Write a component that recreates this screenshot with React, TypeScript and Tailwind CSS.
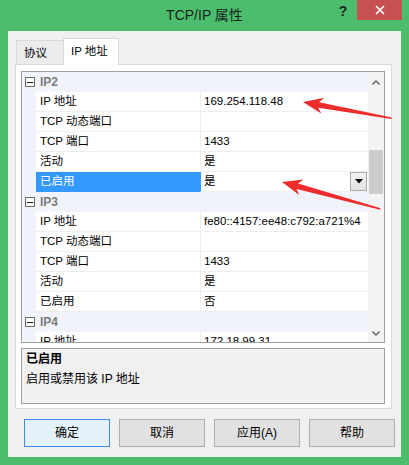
import React from "react";

type Row = { cat?: string; n?: string; v?: string; sel?: boolean };

const rows: Row[] = [
  { cat: "IP2" },
  { n: "IP 地址", v: "169.254.118.48" },
  { n: "TCP 动态端口", v: "" },
  { n: "TCP 端口", v: "1433" },
  { n: "活动", v: "是" },
  { n: "已启用", v: "是", sel: true },
  { cat: "IP3" },
  { n: "IP 地址", v: "fe80::4157:ee48:c792:a721%4" },
  { n: "TCP 动态端口", v: "" },
  { n: "TCP 端口", v: "1433" },
  { n: "活动", v: "是" },
  { n: "已启用", v: "否" },
  { cat: "IP4" },
  { n: "IP 地址", v: "172.18.99.31" },
];

function Minus() {
  return (
    <div className="w-[10px] h-[10px] border border-[#6e6e6e] bg-white flex items-center justify-center">
      <div className="w-[6px] h-[1px] bg-[#222]" />
    </div>
  );
}

function GridRow({ r }: { r: Row }) {
  if (r.cat) {
    return (
      <div className="h-[20px] shrink-0 flex items-center bg-[#f0f4fa]">
        <div className="w-[14px] h-full flex items-center justify-center pl-[2px]">
          <Minus />
        </div>
        <span className="pl-[4px] font-bold text-[#7b7b7b] text-[12px]">{r.cat}</span>
      </div>
    );
  }
  return (
    <div className="h-[20px] shrink-0 flex">
      <div className="w-[14px] h-full bg-[#f0f4fa]" />
      <div
        className={
          r.sel
            ? "w-[164px] h-full flex items-center pl-[4px] bg-[#3399ff] text-white border-b border-[#3399ff]"
            : "w-[164px] h-full flex items-center pl-[4px] bg-white border-b border-[#eeeeee]"
        }
      >
        <span className="whitespace-nowrap">{r.n}</span>
      </div>
      <div
        className={
          r.sel
            ? "flex-1 h-full flex items-center pl-[3px] bg-white border-l border-[#3399ff] border-b border-b-[#eeeeee]"
            : "flex-1 h-full flex items-center pl-[3px] bg-white border-l border-[#eeeeee] border-b border-b-[#eeeeee]"
        }
      >
        <span className="flex-1 whitespace-nowrap overflow-hidden">{r.v}</span>
        {r.sel && (
          <div className="w-[17px] h-[19px] mr-[1px] border border-[#acacac] bg-gradient-to-b from-[#f2f2f2] to-[#e2e2e2] flex items-center justify-center">
            <svg width="8" height="5" viewBox="0 0 8 5">
              <path d="M0 0 L8 0 L4 4.5 Z" fill="#000" />
            </svg>
          </div>
        )}
      </div>
    </div>
  );
}

function Btn({ label, primary }: { label: string; primary?: boolean }) {
  return (
    <div
      className={
        primary
          ? "w-[86px] h-[28px] border border-[#3c8ee6] bg-[#e5f1fb] flex items-center justify-center text-[12px]"
          : "w-[86px] h-[28px] border border-[#adadad] bg-[#e1e1e1] flex items-center justify-center text-[12px]"
      }
    >
      {label}
    </div>
  );
}

export default function App() {
  return (
    <div className="relative w-[409px] h-[465px] bg-[#4cbd6d] flex flex-col overflow-hidden text-black font-[family-name:'Liberation_Sans','Noto_Sans_CJK_SC',sans-serif]">
      {/* title bar */}
      <div className="relative h-[31px] shrink-0 flex items-center justify-center">
        <span className="text-[14px] text-[#17261b] mt-[-1px]">TCP/IP 属性</span>
        <div className="absolute right-[7px] top-0 flex items-start">
          <div className="w-[22px] h-[22px] mr-[3px] flex items-center justify-center font-bold text-[14px] text-[#1a2a1e]">
            ?
          </div>
          <div className="w-[45px] h-[20px] bg-[#c75050] flex items-center justify-center">
            <svg width="10" height="10" viewBox="0 0 10 10">
              <path d="M1 1 L9 9 M9 1 L1 9" stroke="#fff" strokeWidth="1.6" />
            </svg>
          </div>
        </div>
      </div>

      {/* client */}
      <div className="mx-[8px] mb-[8px] flex-1 bg-[#f0f0f0] flex flex-col">
        {/* tabs */}
        <div className="h-[33px] shrink-0 pt-[7px] pl-[8px] flex items-end relative z-10">
          <div className="w-[48px] h-[24px] border border-[#d9d9d9] border-b-0 bg-[#ececec] flex items-center pl-[7px] text-[11.5px] pt-[2px]">
            协议
          </div>
          <div className="w-[56px] h-[27px] ml-[-1px] border border-[#d9d9d9] border-b-0 bg-white flex items-center pl-[7px] text-[11.5px] mb-[-1px] pb-[1px]">
            IP 地址
          </div>
        </div>

        {/* panel */}
        <div className="ml-[7px] w-[377px] h-[345px] shrink-0 border border-[#d9d9d9] bg-white pt-[6px] pl-[5px] flex flex-col">
          {/* property grid */}
          <div className="w-[364px] h-[272px] border border-[#a0a0a0] flex bg-white text-[11.5px]">
            <div className="flex-1 flex flex-col overflow-hidden">
              {rows.map((r, i) => (
                <GridRow key={i} r={r} />
              ))}
            </div>
            <div className="w-[16px] bg-[#f3f3f3] flex flex-col">
              <div className="h-[20px] flex items-center justify-center">
                <svg width="8" height="5" viewBox="0 0 8 5">
                  <path d="M0.5 4.5 L4 1 L7.5 4.5" stroke="#606060" strokeWidth="1.4" fill="none" />
                </svg>
              </div>
              <div className="h-[58px]" />
              <div className="h-[44px] mx-[1px] bg-[#cdcdcd]" />
              <div className="flex-1" />
              <div className="h-[17px] flex items-center justify-center">
                <svg width="8" height="5" viewBox="0 0 8 5">
                  <path d="M0.5 0.5 L4 4 L7.5 0.5" stroke="#606060" strokeWidth="1.4" fill="none" />
                </svg>
              </div>
            </div>
          </div>

          {/* description */}
          <div className="w-[364px] h-[56px] mt-[5px] border border-[#a0a0a0] bg-[#f0f0f0] pt-[2px] pl-[4px] text-[12px]">
            <div className="leading-[16px] font-bold">已启用</div>
            <div className="leading-[16px] mt-[4px]">启用或禁用该 IP 地址</div>
          </div>
        </div>

        {/* buttons */}
        <div className="mt-[10px] ml-[16px] flex gap-[9px]">
          <Btn label="确定" primary />
          <Btn label="取消" />
          <Btn label="应用(A)" />
          <Btn label="帮助" />
        </div>
      </div>

      {/* annotation arrows */}
      <svg className="absolute inset-0 pointer-events-none" width="409" height="465" viewBox="0 0 409 465">
        <polygon
          transform="translate(303 102) rotate(10.4)"
          points="0,0 20,-8 16,-2.8 90,-0.8 90,0.8 16,2.8 20,8"
          fill="#ee2c2c"
        />
        <polygon
          transform="translate(282 182) rotate(15.4)"
          points="0,0 20,-8 16,-2.8 102,-0.8 102,0.8 16,2.8 20,8"
          fill="#ee2c2c"
        />
      </svg>
    </div>
  );
}
